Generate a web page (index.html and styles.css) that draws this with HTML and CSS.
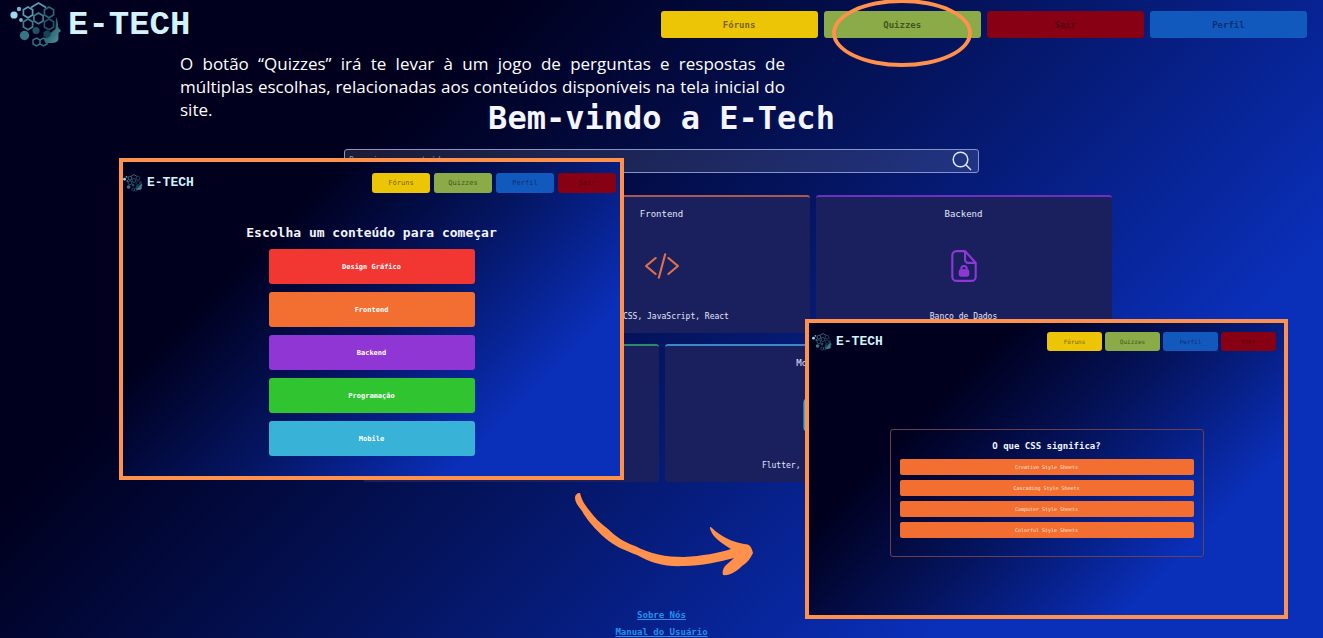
FILE: index.html
```html
<!DOCTYPE html>
<html lang="pt-BR">
<head>
<meta charset="utf-8">
<title>E-Tech</title>
<meta name="viewport" content="width=device-width, initial-scale=1">
<link rel="stylesheet" href="styles.css">
</head>
<body>
<svg class="defs" width="0" height="0" aria-hidden="true">
  <defs>
    <linearGradient id="teal" x1="0" y1="0" x2="1" y2="1">
      <stop offset="0" stop-color="#1d4b58"/>
      <stop offset="0.5" stop-color="#2f6674"/>
      <stop offset="1" stop-color="#4f9aa4"/>
    </linearGradient>
    <symbol id="mark" viewBox="0 0 52 46">
      <circle cx="4" cy="13" r="3.6" fill="#9fd9ee"/>
      <circle cx="9" cy="7" r="2.2" fill="#6fb4cc"/>
      <circle cx="11" cy="18" r="1.9" fill="#6fb4cc"/>
      <g fill="none" stroke-width="1.7">
        <path d="M18 5l4.6 2.7v5.4L18 15.800l-4.600-2.700V7.700z" stroke="#5c9cae"/>
        <path d="M39 5l4.600 2.700v5.400L39 15.800l-4.600-2.700V7.700z" stroke="#2d6372"/>
        <path d="M28.500 11l4.600 2.700v5.400l-4.600 2.700-4.600-2.700v-5.400z" stroke="#3f7d8c"/>
        <path d="M18 17l4.600 2.700v5.400L18 27.800l-4.600-2.700v-5.400z" stroke="#3f7d8c"/>
        <path d="M39 17l4.600 2.700v5.400L39 27.800l-4.600-2.700v-5.400z" stroke="#245462"/>
        <path d="M21 5.500l7.500-4.500L36 5.500" stroke="#5c9cae"/>
      </g>
      <circle cx="14.500" cy="33.500" r="4.700" fill="#397683"/>
      <circle cx="26" cy="28.500" r="3.600" fill="#1f5361"/>
      <path d="M46 15c2 3 2 7 2 10l3 4-2.500 2v5c0 4-3 5-8 5h-5l-2-4 3-2 4-4 5-4z" fill="url(#teal)"/>
      <path d="M37 28l3.500 2v4L37 36l-3.500-2v-4z" fill="#174452"/>
      <g fill="none" stroke="#33707d" stroke-width="1.500">
        <path d="M26.500 36l3.500 2v4l-3.500 2-3.500-2v-4zM33.500 36l3.500 2v4l-3.500 2-3.500-2v-4z"/>
      </g>
    </symbol>
  </defs>
</svg>

<div class="page">
  <header class="top">
    <div class="brand">
      <svg class="mark" aria-hidden="true"><use href="#mark"/></svg>
      <span>E-TECH</span>
    </div>
    <nav class="nav">
      <button class="btn yellow">Fóruns</button>
      <button class="btn green">Quizzes</button>
      <button class="btn red">Sair</button>
      <button class="btn blue">Perfil</button>
    </nav>
  </header>

  <main class="home">
    <h1>Bem-vindo a E-Tech</h1>
    <form class="search">
      <input type="search" aria-label="Pesquisar" placeholder="Pesquise um conteúdo">
      <svg viewBox="0 0 20 20" aria-hidden="true"><circle cx="8.500" cy="8.500" r="7.300"/><path d="M13.800 13.800l5.200 5.200"/></svg>
    </form>
    <div class="cards">
      <section class="card c-red"></section>
      <section class="card c-orange">
        <h2>Frontend</h2>
        <svg class="icon" viewBox="0 0 32 32" aria-hidden="true"><path d="M10 8.500L1 16l9 7.500M22 8.500L31 16l-9 7.500M19 5l-6 22"/></svg>
        <p>HTML, CSS, JavaScript, React</p>
      </section>
      <section class="card c-purple">
        <h2>Backend</h2>
        <svg class="icon" viewBox="0 0 32 32" aria-hidden="true"><path d="M17 2H9a4 4 0 0 0-4 4v20a4 4 0 0 0 4 4h14a4 4 0 0 0 4-4V13zM17 2v8a3 3 0 0 0 3 3h7"/><path d="M13.500 20v-1.500a2.500 2.500 0 0 1 5 0V20"/><rect class="solid" x="12" y="20" width="8" height="5" rx="1"/></svg>
        <p>Banco de Dados</p>
      </section>
      <section class="card c-green"></section>
      <section class="card c-cyan">
        <h2>Mobile</h2>
        <svg class="icon" viewBox="0 0 32 32" aria-hidden="true"><rect x="8" y="1" width="16" height="30" rx="3"/><path d="M14 27h4"/></svg>
        <p>Flutter, React Native</p>
      </section>
    </div>
  </main>

  <footer class="links">
    <a href="#">Sobre Nós</a>
    <a href="#">Manual do Usuário</a>
  </footer>

  <p class="note">O botão “Quizzes” irá te levar à um jogo de perguntas e respostas de múltiplas escolhas, relacionadas aos conteúdos disponíveis na tela inicial do site.</p>

  <div class="ring"></div>

  <section class="shot shot-topics">
    <header class="shot-top">
      <div class="brand small">
        <svg class="mark" aria-hidden="true"><use href="#mark"/></svg>
        <span>E-TECH</span>
      </div>
      <nav class="nav">
        <button class="btn yellow">Fóruns</button>
        <button class="btn green">Quizzes</button>
        <button class="btn blue">Perfil</button>
        <button class="btn red">Sair</button>
      </nav>
    </header>
    <h2>Escolha um conteúdo para começar</h2>
    <div class="topics">
      <button class="t-red">Design Gráfico</button>
      <button class="t-orange">Frontend</button>
      <button class="t-purple">Backend</button>
      <button class="t-green">Programação</button>
      <button class="t-cyan">Mobile</button>
    </div>
  </section>

  <section class="shot shot-question">
    <header class="shot-top">
      <div class="brand small">
        <svg class="mark" aria-hidden="true"><use href="#mark"/></svg>
        <span>E-TECH</span>
      </div>
      <nav class="nav">
        <button class="btn yellow">Fóruns</button>
        <button class="btn green">Quizzes</button>
        <button class="btn blue">Perfil</button>
        <button class="btn red">Sair</button>
      </nav>
    </header>
    <div class="question">
      <h2>O que CSS significa?</h2>
      <button class="t-orange">Creative Style Sheets</button>
      <button class="t-orange">Cascading Style Sheets</button>
      <button class="t-orange">Computer Style Sheets</button>
      <button class="t-orange">Colorful Style Sheets</button>
    </div>
  </section>

  <svg class="arrow" viewBox="0 0 180 84" aria-hidden="true">
    <path d="M1 6C1 3 3 1 6 1C8 9 11 13 15 18C20 25 26 31 34 37C42 45 50 50 61 54C76 62 92 65 110 65C128 64 145 61 157 57C147 51 139 45 137 39C135 35 136 34 138 36C146 44 158 50 170 52C177 52 178 57 179 61C176 67 173 71 168 74C162 80 155 84 149 83C148 80 149 77 151 74L160 66C144 70 128 74 110 74C91 75 77 71 63 63C50 58 40 54 31 46C21 37 13 28 8 19C4 14 1 10 1 6z"/>
  </svg>
</div>
</body>
</html>
```

FILE: styles.css
```css
* {
  box-sizing: border-box;
}

body {
  margin: 0;
  font-family: "DejaVu Sans Mono", monospace;
  color: #f4f5ff;
}

h1, h2, p {
  margin: 0;
}

button {
  border: 0;
  padding: 0;
  font-family: inherit;
  cursor: pointer;
}

.defs {
  position: absolute;
}

.page {
  position: relative;
  display: flex;
  flex-direction: column;
  min-height: 100vh;
  overflow: hidden;
  background: linear-gradient(135deg, #00001e 26%, #04145f 51%, #0a2fb9 80%);
}

/* Header */
.top {
  display: flex;
  align-items: center;
  gap: 4px;
  height: 49px;
  padding: 0 16px 0 10px;
}

.brand {
  display: flex;
  flex: 1;
  align-items: center;
  gap: 6px;
  font: bold 34px/36px "Liberation Mono", monospace;
  color: #d3f3fb;
}

.mark {
  width: 52px;
  height: 46px;
}

.nav {
  display: flex;
  gap: 6px;
}

.top .nav {
  flex: 1;
}

.btn {
  flex: 1;
  height: 27px;
  border-radius: 3px;
  font-size: 9px;
  font-weight: bold;
}

.yellow { background: #ecc506; color: #7a6508; }
.green { background: #8bab48; color: #42561e; }
.red { background: #870014; color: #54000e; }
.blue { background: #1259bd; color: #0b2f74; }

/* Home */
.home {
  display: flex;
  flex-direction: column;
  align-items: center;
  padding-top: 49px;
}

h1 {
  font-size: 32px;
  line-height: 40px;
}

.search {
  display: flex;
  align-items: center;
  width: 48%;
  height: 24px;
  margin-top: 11px;
  padding: 0 6px 0 4px;
  border: 1px solid #8794c9;
  border-radius: 3px;
  background: rgba(255, 255, 255, 0.11);
}

.search input {
  flex: 1;
  border: 0;
  padding: 0;
  outline: 0;
  background: none;
  font: 8px/12px "DejaVu Sans Mono", monospace;
  color: #ffffff;
}

.search input::placeholder {
  color: #8a8fb0;
}

.search svg {
  width: 20px;
  height: 20px;
  fill: none;
  stroke: #dfe6ff;
  stroke-width: 1.5;
}

.cards {
  display: flex;
  flex-wrap: wrap;
  justify-content: center;
  gap: 11px 6px;
  max-width: 900px;
  margin-top: 22px;
}

.card {
  display: flex;
  flex-direction: column;
  align-items: center;
  justify-content: space-between;
  width: 296px;
  height: 138px;
  padding: 11px 0 10px;
  border-top: 2px solid;
  border-radius: 3px;
  background: #1a205e;
}

.card h2 {
  font-size: 9px;
  line-height: 12px;
  font-weight: normal;
  color: #e4e6fa;
}

.card p {
  font-size: 8px;
  line-height: 12px;
  color: #e4e6fa;
}

.icon {
  width: 34px;
  height: 34px;
  fill: none;
  stroke: currentColor;
  stroke-width: 2;
  stroke-linecap: round;
  stroke-linejoin: round;
}

.solid {
  fill: currentColor;
}

.c-red { border-color: #c23a46; }
.c-orange { border-color: #a85a50; color: #e0714a; }
.c-purple { border-color: #6a32bd; color: #8c37d6; }
.c-green { border-color: #2e8a66; }
.c-cyan { border-color: #3d87c4; color: #3ab0d8; }

/* Footer */
.links {
  display: flex;
  flex-direction: column;
  align-items: center;
  gap: 5px;
  margin-top: auto;
}

.links a {
  font-size: 9px;
  line-height: 12px;
  font-weight: bold;
  color: #2590ea;
}

/* Annotations laid over the page */
.note {
  position: absolute;
  top: 52px;
  left: 180px;
  width: 605px;
  font: 17px/23px "Open Sans", "Noto Sans", sans-serif;
  text-align: justify;
  color: #ffffff;
}

.ring {
  position: absolute;
  top: -1px;
  left: 832px;
  width: 140px;
  height: 68px;
  border: 4px solid #ff914d;
  border-radius: 50%;
}

.arrow {
  position: absolute;
  top: 492px;
  left: 574px;
  width: 180px;
  height: 84px;
  fill: #ff914d;
}

.shot {
  position: absolute;
  display: flex;
  flex-direction: column;
  align-items: center;
  border: 4px solid #ff914d;
  background: linear-gradient(135deg, #00001e 27%, #04145f 52%, #0a2fb9 79%) padding-box;
}

.shot-top {
  display: flex;
  align-items: center;
  align-self: stretch;
}

.shot .nav {
  gap: 4px;
}

.small {
  gap: 4px;
  font-size: 13px;
  line-height: 16px;
}

.small .mark {
  width: 20px;
  height: 18px;
}

.shot-topics {
  top: 158px;
  left: 119px;
  width: 505px;
  height: 322px;
}

.shot-topics .shot-top {
  height: 42px;
  padding-right: 4px;
}

.shot-topics .btn {
  flex: none;
  width: 58px;
  height: 20px;
  font-size: 7px;
  font-weight: normal;
}

.shot-topics h2 {
  margin-top: 20px;
  font-size: 13px;
  line-height: 18px;
}

.topics {
  display: flex;
  flex-direction: column;
  gap: 8px;
  width: 206px;
  margin-top: 7px;
}

.topics button {
  height: 35px;
  border-radius: 3px;
  font-size: 7px;
  font-weight: bold;
  color: #ffffff;
}

.t-red { background: #f23631; }
.t-orange { background: #f26e31; }
.t-purple { background: #9036d4; }
.t-green { background: #31c431; }
.t-cyan { background: #38b2d6; }

.shot-question {
  top: 319px;
  left: 805px;
  width: 483px;
  height: 300px;
}

.shot-question .shot-top {
  height: 37px;
  padding: 0 8px 0 3px;
}

.shot-question .nav {
  gap: 3px;
}

.shot-question .btn {
  flex: none;
  width: 55px;
  height: 19px;
  font-size: 6px;
  font-weight: normal;
}

.question {
  display: flex;
  flex-direction: column;
  gap: 5px;
  width: 314px;
  height: 128px;
  margin-top: 69px;
  padding: 8px 9px;
  border: 1px solid #6b414f;
  border-radius: 3px;
}

.question h2 {
  font-size: 9px;
  line-height: 16px;
  text-align: center;
}

.question button {
  height: 16px;
  border-radius: 2px;
  font-size: 5px;
  color: #ffe9dc;
}
```
